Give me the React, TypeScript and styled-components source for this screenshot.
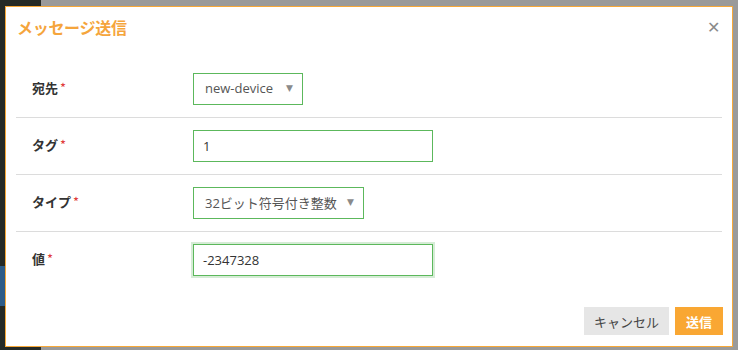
import React from "react";
import styled, { createGlobalStyle } from "styled-components";

const Global = createGlobalStyle`
  html, body { margin: 0; padding: 0; }
  body {
    width: 738px; height: 350px; overflow: hidden;
    font-family: "Open Sans", "Noto Sans CJK JP", sans-serif;
  }
`;

const Page = styled.div`
  position: relative;
  width: 738px;
  height: 350px;
  display: flex;
  background: #9a9a9a;
`;

const Sidebar = styled.div`
  width: 41px;
  background: #252a26;
  display: flex;
  flex-direction: column;
`;

const SideBlue = styled.div`
  margin-top: 266px;
  height: 40px;
  width: 6px;
  background: #2d5c88;
`;

const Backdrop = styled.div`
  flex: 1;
  background: #9a9a9a;
`;

const Modal = styled.div`
  position: absolute;
  left: 5px;
  top: 6px;
  width: 728px;
  height: 341px;
  box-sizing: border-box;
  border: 1px solid #f7a838;
  background: #fff;
  display: flex;
  flex-direction: column;
`;

const Header = styled.div`
  height: 54px;
  display: flex;
  align-items: center;
  justify-content: space-between;
  padding: 0 12px 0 11px;
  box-sizing: border-box;
`;

const Title = styled.h1`
  margin: 0;
  font-family: "Noto Sans CJK JP", sans-serif;
  font-size: 16px;
  font-weight: bold;
  color: #f5a53c;
  padding-bottom: 14px;
  letter-spacing: -0.3px;
`;

const Close = styled.span`
  color: #8a8a8a;
  font-size: 16px;
  font-family: "Liberation Sans", sans-serif;
  padding-bottom: 12px;
  line-height: 1;
`;

const Body = styled.div`
  padding: 0 10px;
`;

const Row = styled.div<{ $last?: boolean }>`
  display: flex;
  align-items: center;
  padding: 12px 0;
  border-bottom: ${(p) => (p.$last ? "none" : "1px solid #dcdcdc")};
`;

const Label = styled.div`
  width: 177px;
  padding-left: 16px;
  padding-bottom: 3px;
  box-sizing: border-box;
  font-family: "Noto Sans CJK JP", sans-serif;
  font-size: 13px;
  font-weight: bold;
  color: #333;
`;

const Req = styled.span`
  color: #e03a3a;
  margin-left: 2px;
  font-weight: normal;
`;

const Select = styled.div<{ $w: number }>`
  width: ${(p) => p.$w}px;
  height: 32px;
  box-sizing: border-box;
  border: 1px solid #5cb85c;
  display: flex;
  align-items: center;
  padding: 0 9px 2px 11px;
  font-size: 13px;
  color: #555;
  justify-content: space-between;
`;

const SelectText = styled.span`
  font-family: "Open Sans", "Noto Sans CJK JP", sans-serif;
`;

const Arrow = styled.span`
  color: #8a8a8a;
  font-size: 9px;
  font-family: "DejaVu Sans", sans-serif;
  margin-left: 8px;
`;

const Input = styled.div<{ $focus?: boolean }>`
  width: 240px;
  height: 32px;
  box-sizing: border-box;
  border: 1px solid #5cb85c;
  display: flex;
  align-items: center;
  padding: 0 9px 1px;
  font-size: 13px;
  color: #333;
  box-shadow: ${(p) => (p.$focus ? "0 0 0 2px #d6ecd6" : "none")};
`;

const Footer = styled.div`
  flex: 1;
  display: flex;
  justify-content: flex-end;
  align-items: flex-start;
  gap: 6px;
  padding: 19px 9px 0 0;
`;

const Button = styled.button<{ $primary?: boolean }>`
  height: 28px;
  border: none;
  padding: 0 ${(p) => (p.$primary ? 11 : 10)}px;
  font-family: "Noto Sans CJK JP", sans-serif;
  font-size: 13px;
  background: ${(p) => (p.$primary ? "#f9a733" : "#e6e6e6")};
  color: ${(p) => (p.$primary ? "#fff" : "#444")};
  font-weight: ${(p) => (p.$primary ? "bold" : "normal")};
`;

export default function App() {
  return (
    <>
      <Global />
      <Page>
        <Sidebar>
          <SideBlue />
        </Sidebar>
        <Backdrop />
        <Modal>
          <Header>
            <Title>メッセージ送信</Title>
            <Close>✕</Close>
          </Header>
          <Body>
            <Row>
              <Label>
                宛先<Req>*</Req>
              </Label>
              <Select $w={110}>
                <SelectText>new-device</SelectText>
                <Arrow>▼</Arrow>
              </Select>
            </Row>
            <Row>
              <Label>
                タグ<Req>*</Req>
              </Label>
              <Input>1</Input>
            </Row>
            <Row>
              <Label>
                タイプ<Req>*</Req>
              </Label>
              <Select $w={171}>
                <SelectText>32ビット符号付き整数</SelectText>
                <Arrow>▼</Arrow>
              </Select>
            </Row>
            <Row $last>
              <Label>
                値<Req>*</Req>
              </Label>
              <Input $focus>-2347328</Input>
            </Row>
          </Body>
          <Footer>
            <Button>キャンセル</Button>
            <Button $primary>送信</Button>
          </Footer>
        </Modal>
      </Page>
    </>
  );
}
